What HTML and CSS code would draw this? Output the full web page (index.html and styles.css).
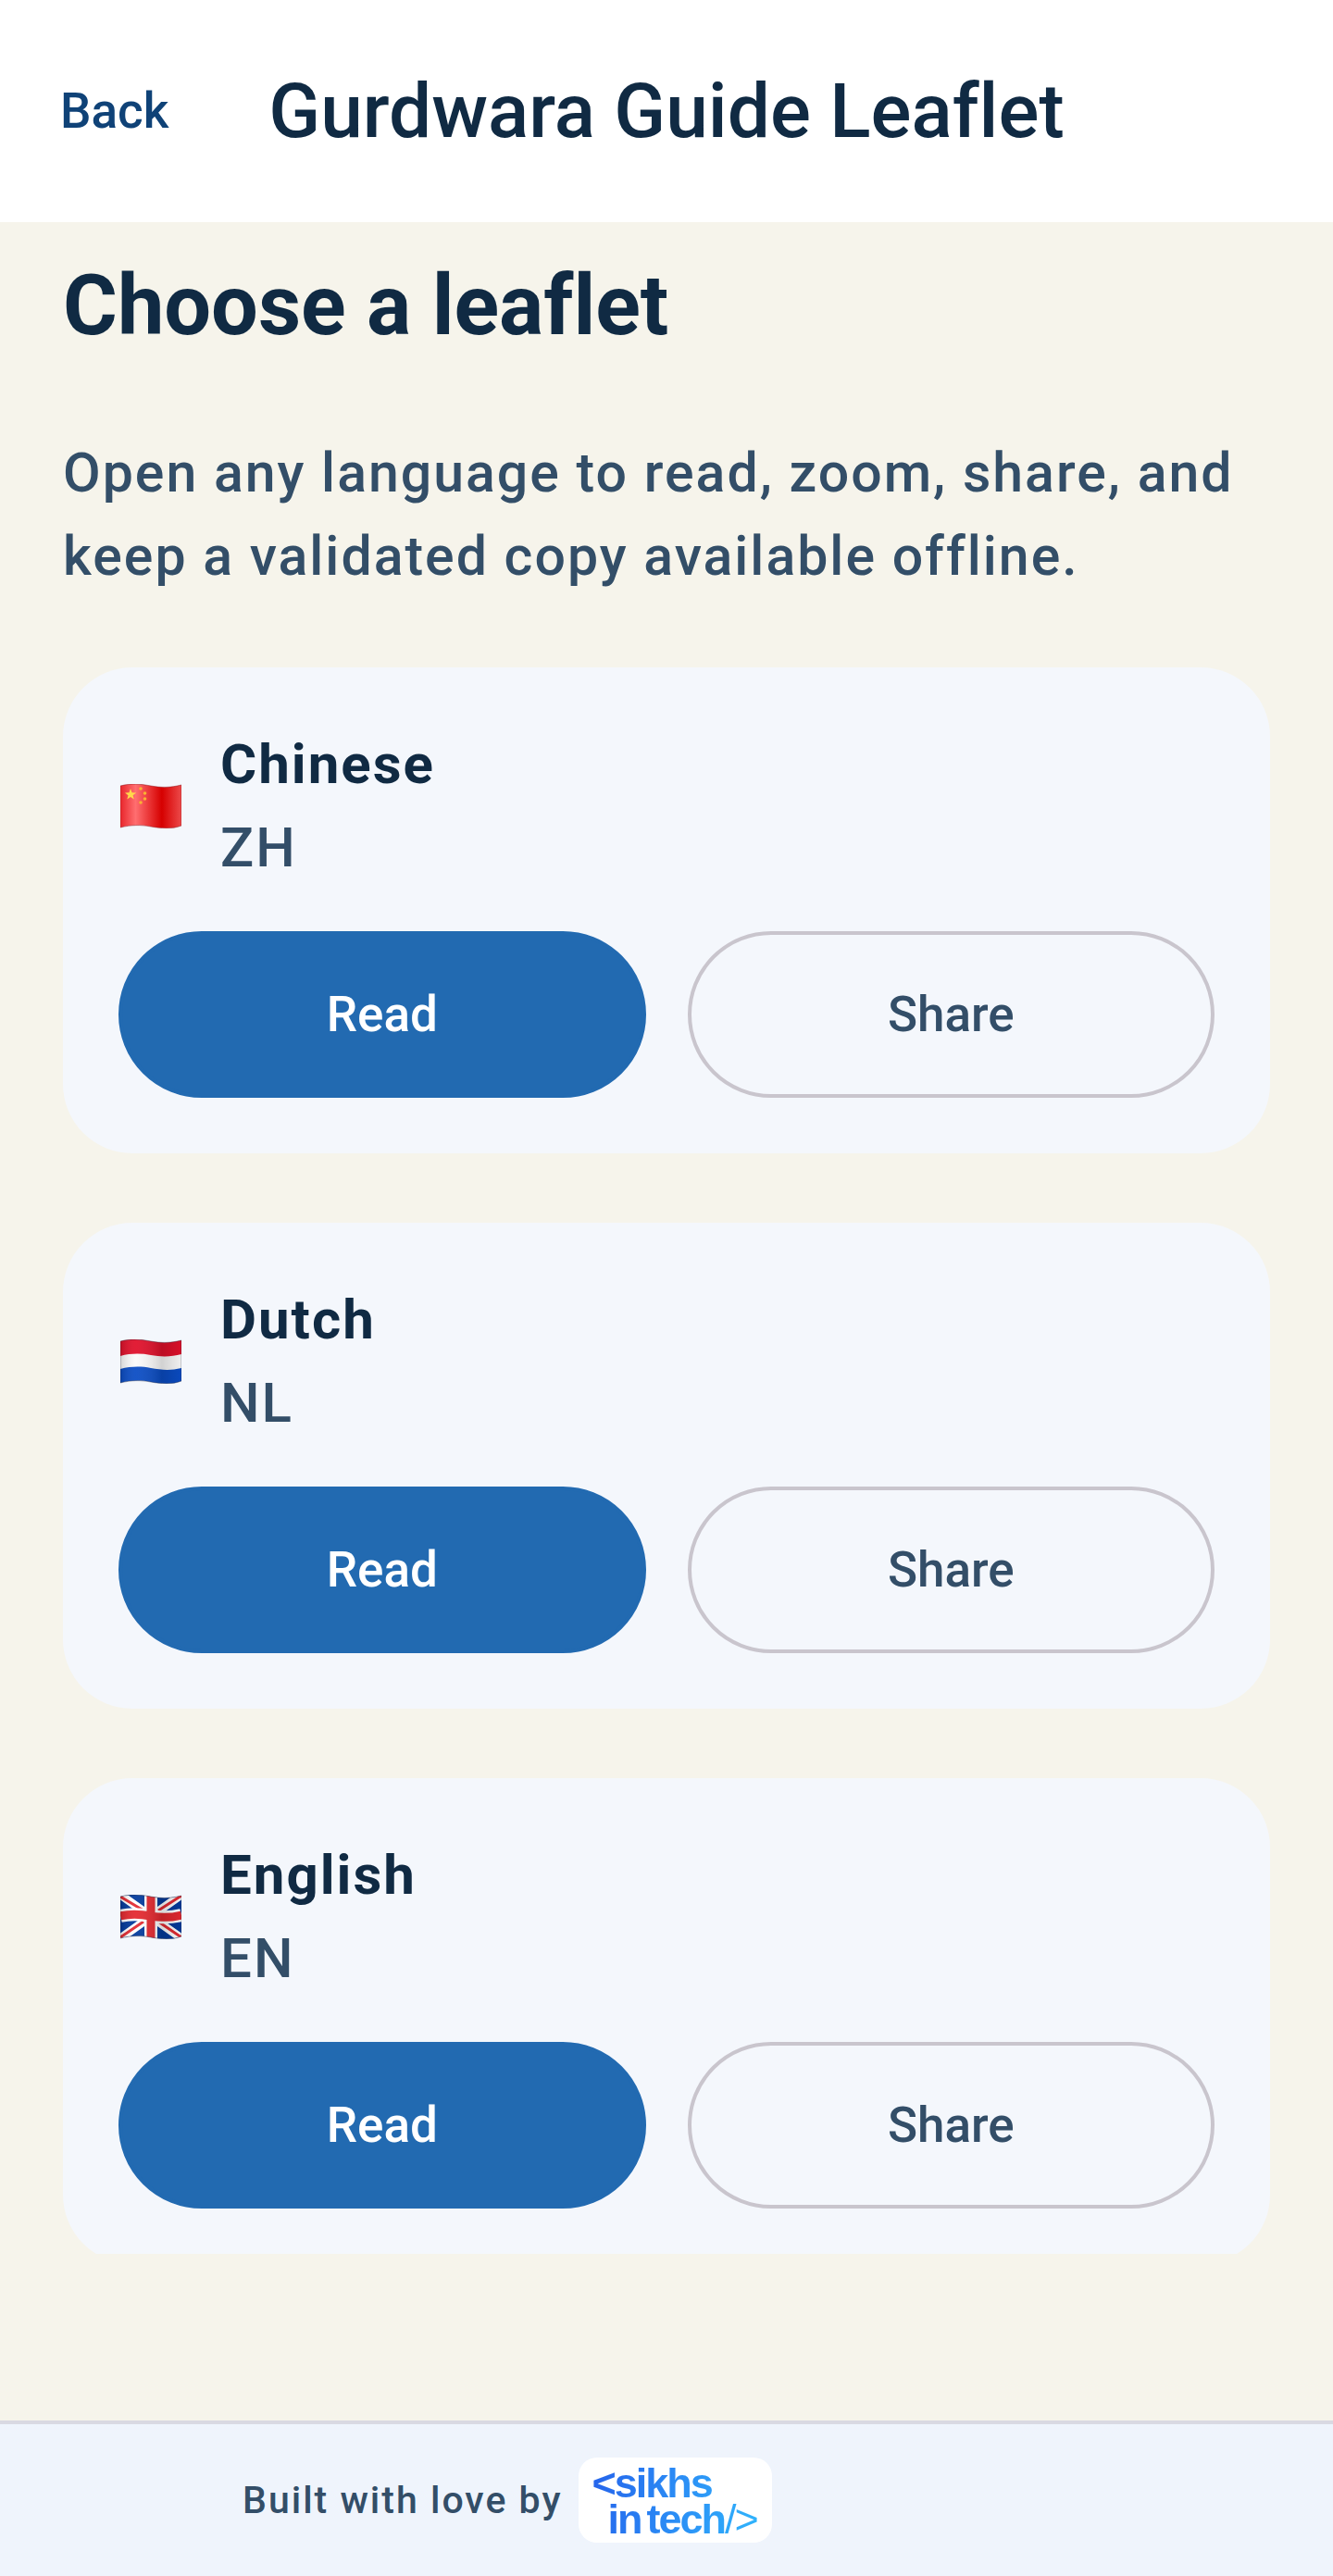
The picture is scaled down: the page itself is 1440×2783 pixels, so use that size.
FILE: index.html
```html
<!DOCTYPE html>
<html lang="en">
<head>
<meta charset="utf-8">
<meta name="viewport" content="width=device-width, initial-scale=1">
<title>Gurdwara Guide Leaflet</title>
<link rel="stylesheet" href="styles.css">
</head>
<body>
<header class="topbar">
  <a class="back" href="#">Back</a>
  <h1 class="topbar-title">Gurdwara Guide Leaflet</h1>
</header>

<main class="content">
  <h2 class="heading">Choose a leaflet</h2>
  <p class="intro">Open any language to read, zoom, share, and keep a validated copy available offline.</p>

  <article class="card">
    <div class="language">
      <svg class="flag" viewBox="0 0 66 48" role="img" aria-label="Flag of China">
        <defs>
          <clipPath id="wave"><path d="M0 2C12-1 22 0 33 2S54 4 66 1V45C56 49 44 48 33 46S12 44 0 47Z"/></clipPath>
          <linearGradient id="red"><stop offset="0" stop-color="#e8262b"/><stop offset=".25" stop-color="#ff6e70"/><stop offset=".68" stop-color="#d60000"/><stop offset="1" stop-color="#ec4a4a"/></linearGradient>
          <linearGradient id="shade"><stop offset="0" stop-color="#000" stop-opacity=".15"/><stop offset=".25" stop-color="#fff" stop-opacity=".06"/><stop offset=".68" stop-color="#000" stop-opacity=".16"/><stop offset="1" stop-color="#000" stop-opacity=".04"/></linearGradient>
        </defs>
        <g clip-path="url(#wave)">
          <rect width="66" height="48" fill="url(#red)"/>
          <path fill="#ffd94a" d="M11 5l1.600 4.200 4.500.2-3.500 2.800 1.200 4.300-3.800-2.400-3.700 2.400 1.200-4.300L5 9.400l4.500-.2z"/>
          <g fill="#f9b233"><circle cx="22" cy="5" r="1.800"/><circle cx="26.500" cy="10" r="1.800"/><circle cx="26.500" cy="16" r="1.800"/><circle cx="22" cy="20" r="1.800"/></g>
        </g>
        <path d="M0 2C12-1 22 0 33 2S54 4 66 1V45C56 49 44 48 33 46S12 44 0 47Z" fill="none" stroke="#8d1c24" stroke-opacity=".5"/>
      </svg>
      <div>
        <h3 class="name">Chinese</h3>
        <p class="code">ZH</p>
      </div>
    </div>
    <div class="actions">
      <button class="button primary" type="button">Read</button>
      <button class="button outline" type="button">Share</button>
    </div>
  </article>

  <article class="card">
    <div class="language">
      <svg class="flag" viewBox="0 0 66 48" role="img" aria-label="Flag of the Netherlands">
        <g clip-path="url(#wave)">
          <rect width="66" height="48" fill="#fafafa"/>
          <path fill="#e0102a" d="M0 0H66V16C55 19 44 19 33 17S11 15 0 18Z"/>
          <path fill="#0a4cc4" d="M0 32C12 29 22 29 33 31S54 34 66 31V48H0Z"/>
          <rect width="66" height="48" fill="url(#shade)"/>
        </g>
        <path d="M0 2C12-1 22 0 33 2S54 4 66 1V45C56 49 44 48 33 46S12 44 0 47Z" fill="none" stroke="#20263a" stroke-opacity=".4"/>
      </svg>
      <div>
        <h3 class="name">Dutch</h3>
        <p class="code">NL</p>
      </div>
    </div>
    <div class="actions">
      <button class="button primary" type="button">Read</button>
      <button class="button outline" type="button">Share</button>
    </div>
  </article>

  <article class="card">
    <div class="language">
      <svg class="flag" viewBox="0 0 66 48" role="img" aria-label="Flag of the United Kingdom">
        <g clip-path="url(#wave)">
          <rect width="66" height="48" fill="#023a9c"/>
          <path d="M0 0L66 47M66 0L0 47" stroke="#fff" stroke-width="9"/>
          <path d="M0 2L25 17M41 29L66 46M66 1L41 17M25 29L0 46" stroke="#e32b32" stroke-width="3"/>
          <path d="M33 0V48M0 23C12 20 22 21 33 23S54 25 66 22" fill="none" stroke="#fff" stroke-width="14"/>
          <path d="M33 0V48M0 23C12 20 22 21 33 23S54 25 66 22" fill="none" stroke="#e4282f" stroke-width="9"/>
          <rect width="66" height="48" fill="url(#shade)"/>
        </g>
        <path d="M0 2C12-1 22 0 33 2S54 4 66 1V45C56 49 44 48 33 46S12 44 0 47Z" fill="none" stroke="#20263a" stroke-opacity=".4"/>
      </svg>
      <div>
        <h3 class="name">English</h3>
        <p class="code">EN</p>
      </div>
    </div>
    <div class="actions">
      <button class="button primary" type="button">Read</button>
      <button class="button outline" type="button">Share</button>
    </div>
  </article>
</main>

<footer class="footer">
  <span class="credit">Built with love by</span>
  <a class="logo" href="#">
    <span class="logo-text">
      <span class="logo-line">&lt;sikhs</span>
      <span class="logo-line logo-second"><span>in</span><span>tech<span class="logo-thin">/&gt;</span></span></span>
    </span>
  </a>
</footer>
</body>
</html>
```
FILE: styles.css
```css
* {
  box-sizing: border-box;
}

body {
  display: flex;
  flex-direction: column;
  height: 100vh;
  margin: 0;
  background: #f6f4eb;
  color: #102a43;
  font-family: Roboto, "Liberation Sans", sans-serif;
  font-variant-ligatures: none;
}

h1, h2, h3, p {
  margin: 0;
}

.topbar {
  flex: none;
  display: grid;
  grid-template-columns: 1fr auto 1fr;
  align-items: center;
  min-height: 240px;
  padding: 0 65px;
  background: #fff;
}

.back {
  color: #0f4277;
  font-size: 53px;
  font-weight: 500;
  text-decoration: none;
}

.topbar-title {
  font-size: 82px;
  font-weight: 500;
}

.content {
  flex: 1;
  min-height: 0;
  display: flex;
  flex-direction: column;
  gap: 75px;
  margin-bottom: 180px;
  padding: 31px 68px 0;
  overflow-y: auto;
  scrollbar-width: none;
}

.heading {
  font-size: 90px;
  line-height: 120px;
  font-weight: 700;
}

.intro, .name, .code {
  font-size: 60px;
  line-height: 90px;
  letter-spacing: 2px;
}

.intro, .code {
  color: #334e68;
  font-weight: 500;
}

.intro {
  font-size: 59px;
}

.name {
  font-weight: 700;
}

.card {
  flex: none;
  display: flex;
  flex-direction: column;
  gap: 45px;
  padding: 60px;
  border-radius: 75px;
  background: #f4f7fc;
}

.language {
  display: flex;
  align-items: center;
  gap: 42px;
  padding-left: 2px;
}

.flag {
  flex: none;
  width: 66px;
  height: 48px;
}

.actions {
  display: grid;
  grid-template-columns: 1fr 1fr;
  gap: 45px;
}

.button {
  height: 180px;
  border: 4px solid #c9c5cd;
  border-radius: 90px;
  background: transparent;
  color: #334e68;
  font: 500 53px Roboto, "Liberation Sans", sans-serif;
}

.primary {
  border-color: #226ab1;
  background: #226ab1;
  color: #fff;
}

.footer {
  flex: none;
  display: flex;
  align-items: center;
  gap: 18px;
  padding: 36px 262px;
  border-top: 4px solid #d9d9e2;
  background: #eff4fc;
}

.credit {
  color: #334e68;
  font-size: 41px;
  font-weight: 500;
  letter-spacing: 2px;
  white-space: nowrap;
}

.logo {
  padding: 8px 16px 6px 14px;
  border-radius: 20px;
  background: #fff;
  text-decoration: none;
}

.logo-text {
  display: block;
  background: linear-gradient(100deg, #2563eb, #2b8cf5 50%, #30b4fc);
  background-clip: text;
  -webkit-background-clip: text;
  color: transparent;
  font: 700 45px/39px "Liberation Sans", Arial, sans-serif;
  letter-spacing: -2px;
}

.logo-line {
  display: block;
}

.logo-second {
  display: flex;
  gap: 6px;
  padding-left: 17px;
}

.logo-thin {
  font-weight: 400;
}
```
